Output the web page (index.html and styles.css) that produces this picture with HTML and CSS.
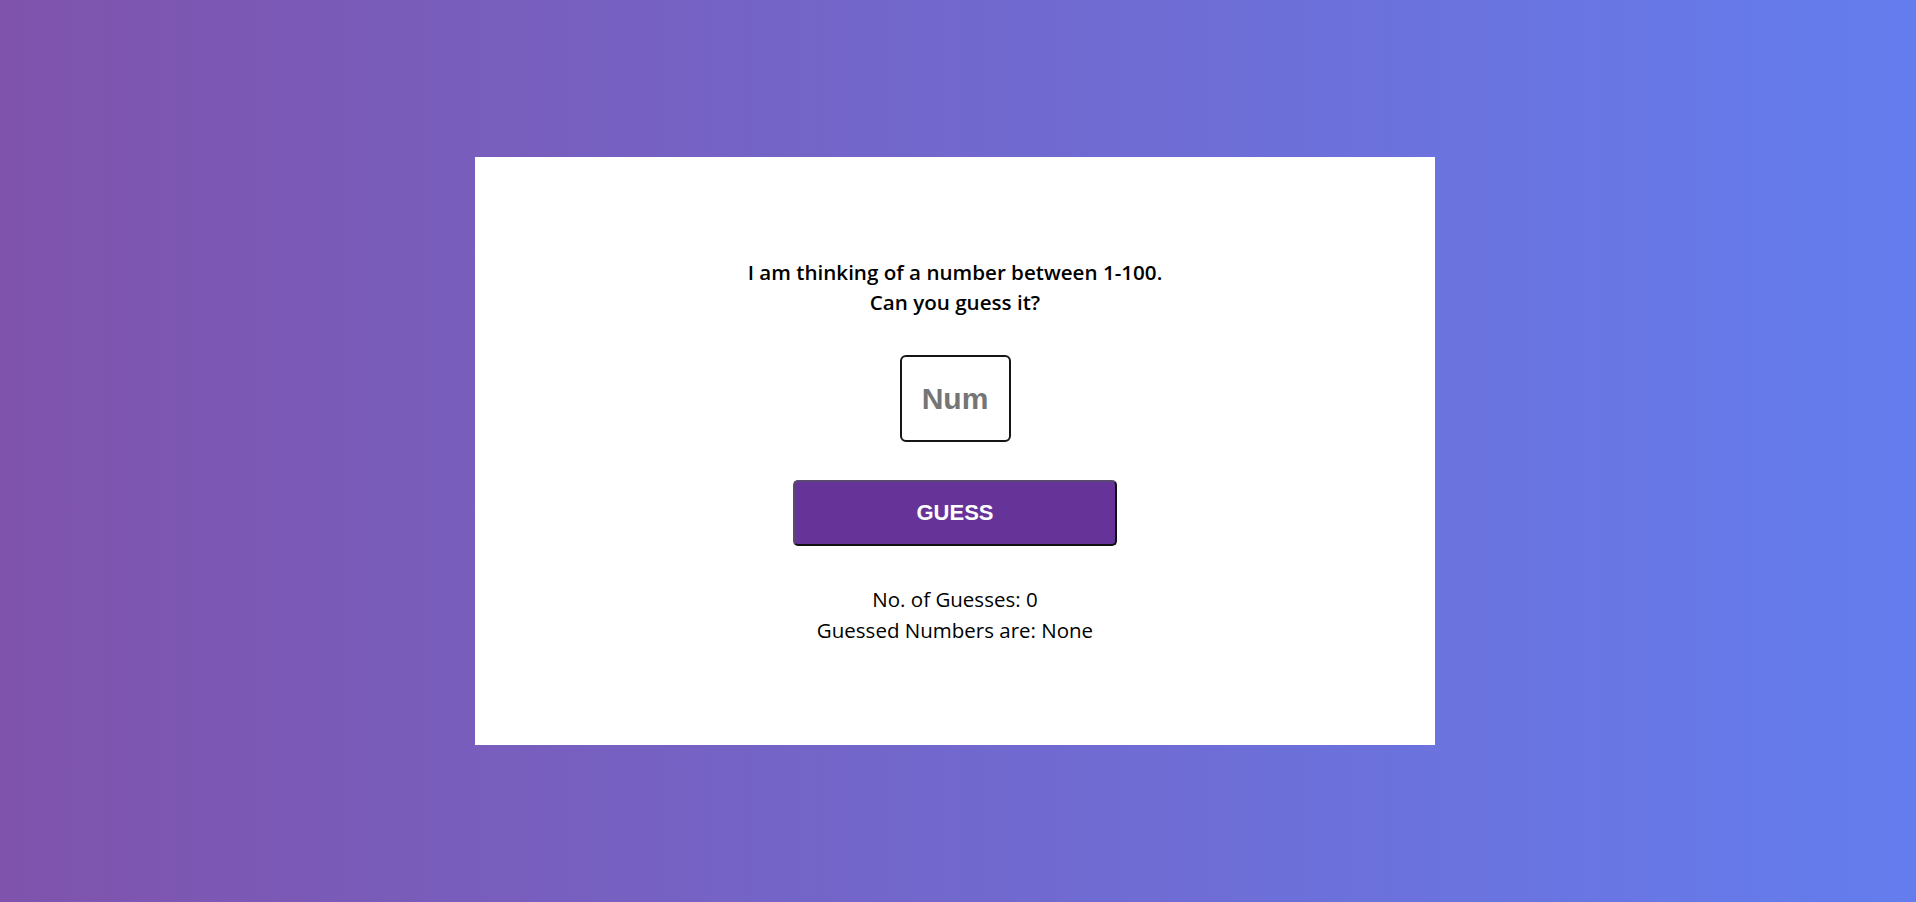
FILE: index.html
```html
<!DOCTYPE html>
<html lang="en">
<head>
<meta charset="utf-8">
<title>Guess the Number</title>
<link rel="stylesheet" href="styles.css">
</head>
<body>
<main class="stage">
  <section class="card">
    <p class="prompt">I am thinking of a number between 1-100.<br>Can you guess it?</p>
    <input class="num-input" type="text" placeholder="Num">
    <button class="guess-btn" type="button">GUESS</button>
    <div class="stats">
      <p class="stat">No. of Guesses: <span>0</span></p>
      <p class="stat">Guessed Numbers are: <span>None</span></p>
    </div>
  </section>
</main>
</body>
</html>
```

FILE: styles.css
```css
* { box-sizing: border-box; }

html, body {
  margin: 0;
  height: 100%;
}

body {
  background: linear-gradient(to right, #7f53ac 0%, #647dee 100%);
  font-family: "Open Sans", "DejaVu Sans", sans-serif;
  color: #000;
}

.stage {
  height: 100%;
  display: flex;
  align-items: center;
  justify-content: center;
  padding-right: 6px;
}

.card {
  width: 960px;
  height: 588px;
  background: #fff;
  display: flex;
  flex-direction: column;
  align-items: center;
  justify-content: center;
  gap: 38px;
}

.prompt {
  margin: 0;
  font-size: 20.6px;
  font-weight: 600;
  line-height: 30px;
  text-align: center;
}

.num-input {
  width: 111px;
  height: 87px;
  border: 2px solid #151515;
  border-radius: 6px;
  background: #fff;
  font-family: "Liberation Sans", Arial, sans-serif;
  font-weight: 700;
  font-size: 30px;
  text-align: center;
  outline: none;
  padding: 0;
}

.num-input::placeholder {
  color: #757575;
}

.guess-btn {
  width: 324px;
  height: 66px;
  background: #663399;
  color: #fff;
  border-width: 2px;
  border-style: solid;
  border-color: #5b4a70 #111 #111 #5b4a70;
  border-radius: 5px;
  font-family: "Liberation Sans", Arial, sans-serif;
  font-weight: 700;
  font-size: 22px;
  padding: 0;
  cursor: pointer;
}

.stats {
  text-align: center;
}

.stat {
  margin: 0;
  font-size: 20.5px;
  font-weight: 400;
  line-height: 30.5px;
}
```
